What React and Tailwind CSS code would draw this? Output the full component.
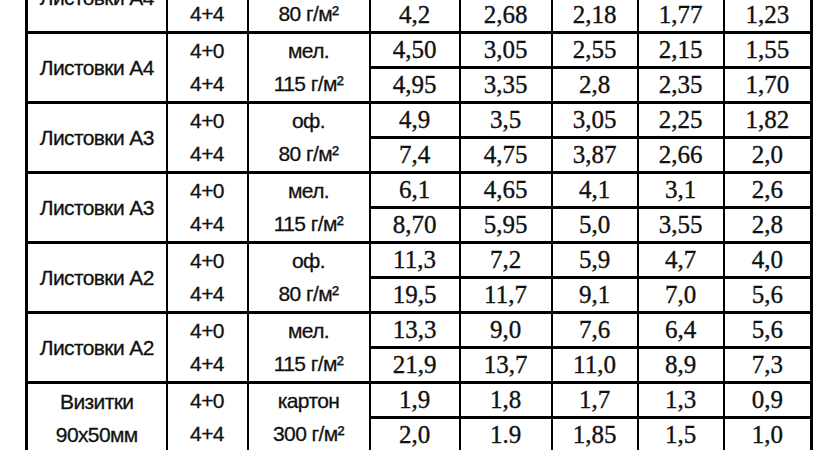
const GROUPS = [
  {
    name: ['Листовки А4'],
    paper: ['оф.', '80 г/м²'],
    rows: [
      ['3,6', '2,25', '1,8', '1,45', '0,98'],
      ['4,2', '2,68', '2,18', '1,77', '1,23'],
    ],
  },
  {
    name: ['Листовки А4'],
    paper: ['мел.', '115 г/м²'],
    rows: [
      ['4,50', '3,05', '2,55', '2,15', '1,55'],
      ['4,95', '3,35', '2,8', '2,35', '1,70'],
    ],
  },
  {
    name: ['Листовки А3'],
    paper: ['оф.', '80 г/м²'],
    rows: [
      ['4,9', '3,5', '3,05', '2,25', '1,82'],
      ['7,4', '4,75', '3,87', '2,66', '2,0'],
    ],
  },
  {
    name: ['Листовки А3'],
    paper: ['мел.', '115 г/м²'],
    rows: [
      ['6,1', '4,65', '4,1', '3,1', '2,6'],
      ['8,70', '5,95', '5,0', '3,55', '2,8'],
    ],
  },
  {
    name: ['Листовки А2'],
    paper: ['оф.', '80 г/м²'],
    rows: [
      ['11,3', '7,2', '5,9', '4,7', '4,0'],
      ['19,5', '11,7', '9,1', '7,0', '5,6'],
    ],
  },
  {
    name: ['Листовки А2'],
    paper: ['мел.', '115 г/м²'],
    rows: [
      ['13,3', '9,0', '7,6', '6,4', '5,6'],
      ['21,9', '13,7', '11,0', '8,9', '7,3'],
    ],
  },
  {
    name: ['Визитки', '90x50мм'],
    paper: ['картон', '300 г/м²'],
    rows: [
      ['1,9', '1,8', '1,7', '1,3', '0,9'],
      ['2,0', '1.9', '1,85', '1,5', '1,0'],
    ],
  },
];

const COLORS = ['4+0', '4+4'];

const sans =
  "font-['Liberation_Sans',Arial,sans-serif] text-[21px] leading-[24px] tracking-[-0.6px] [-webkit-text-stroke:0.3px_#111]";
const serif =
  "font-['Liberation_Serif','Times_New_Roman',serif] text-[25px] leading-[28px] [-webkit-text-stroke:0.35px_#111]";

export default function App() {
  return (
    <div className="w-[840px] h-[450px] overflow-hidden bg-white text-[#111]">
      <table className="table-fixed border-collapse ml-[25px] mt-[-39px] border-[3px] border-black">
        <colgroup>
          <col className="w-[140px]" />
          <col className="w-[81px]" />
          <col className="w-[122px]" />
          <col className="w-[90px]" />
          <col className="w-[92px]" />
          <col className="w-[86px]" />
          <col className="w-[86px]" />
          <col className="w-[88px]" />
        </colgroup>
        <tbody>
          {GROUPS.map((g, gi) =>
            g.rows.map((vals, ri) => (
              <tr key={`${gi}-${ri}`} className="h-[35px]">
                {ri === 0 && (
                  <td
                    rowSpan={2}
                    className={`${sans} p-0 text-center align-middle border-y-[3px] border-x-2 border-black`}
                  >
                    {g.name.map((n) => (
                      <div key={n} className="leading-[33px]">{n}</div>
                    ))}
                  </td>
                )}
                <td
                  className={`${sans} p-0 text-center align-middle border-x-2 border-black ${
                    ri === 0 ? 'border-t-[3px] border-b-0' : 'border-b-[3px] border-t-0'
                  }`}
                >
                  {COLORS[ri]}
                </td>
                <td
                  className={`${sans} p-0 text-center align-middle border-x-2 border-black ${
                    ri === 0 ? 'border-t-[3px] border-b-0' : 'border-b-[3px] border-t-0'
                  }`}
                >
                  {g.paper[ri]}
                </td>
                {vals.map((v, vi) => (
                  <td
                    key={vi}
                    className={`${serif} p-0 text-center align-middle border-x-2 border-y-[3px] border-black`}
                  >
                    {v}
                  </td>
                ))}
              </tr>
            ))
          )}
        </tbody>
      </table>
    </div>
  );
}
